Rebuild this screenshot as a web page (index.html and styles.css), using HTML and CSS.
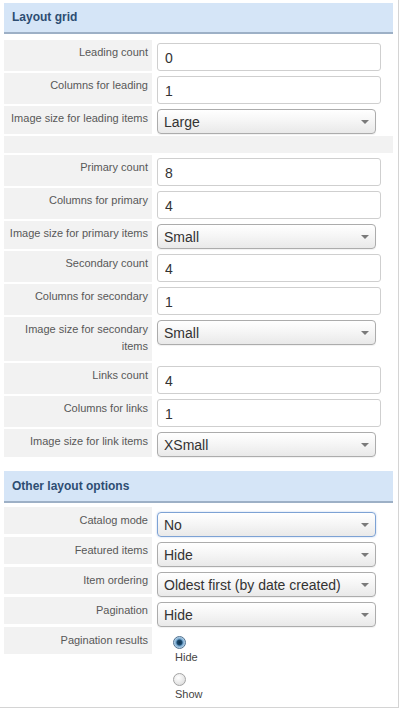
FILE: index.html
```html
<!DOCTYPE html>
<html>
  <head>
    <title>Layout options</title>
    <link rel="stylesheet" href="styles.css">
  </head>
  <body>
    <div class="panel">
      <div class="section-title">Layout grid</div>

      <div class="row">
        <label class="key" for="leadingCount">Leading count</label>
        <div class="field"><input class="text" type="text" id="leadingCount" value="0"></div>
      </div>
      <div class="row">
        <label class="key" for="leadingCols">Columns for leading</label>
        <div class="field"><input class="text" type="text" id="leadingCols" value="1"></div>
      </div>
      <div class="row">
        <label class="key" for="leadingSize">Image size for leading items</label>
        <div class="field">
          <div class="select-wrap">
            <select id="leadingSize"><option>Large</option></select>
          </div>
        </div>
      </div>

      <div class="spacer"></div>

      <div class="row">
        <label class="key" for="primaryCount">Primary count</label>
        <div class="field"><input class="text" type="text" id="primaryCount" value="8"></div>
      </div>
      <div class="row">
        <label class="key" for="primaryCols">Columns for primary</label>
        <div class="field"><input class="text" type="text" id="primaryCols" value="4"></div>
      </div>
      <div class="row">
        <label class="key" for="primarySize">Image size for primary items</label>
        <div class="field">
          <div class="select-wrap">
            <select id="primarySize"><option>Small</option></select>
          </div>
        </div>
      </div>
      <div class="row">
        <label class="key" for="secondaryCount">Secondary count</label>
        <div class="field"><input class="text" type="text" id="secondaryCount" value="4"></div>
      </div>
      <div class="row">
        <label class="key" for="secondaryCols">Columns for secondary</label>
        <div class="field"><input class="text" type="text" id="secondaryCols" value="1"></div>
      </div>
      <div class="row">
        <label class="key" for="secondarySize">Image size for secondary items</label>
        <div class="field">
          <div class="select-wrap">
            <select id="secondarySize"><option>Small</option></select>
          </div>
        </div>
      </div>
      <div class="row">
        <label class="key" for="linksCount">Links count</label>
        <div class="field"><input class="text" type="text" id="linksCount" value="4"></div>
      </div>
      <div class="row">
        <label class="key" for="linksCols">Columns for links</label>
        <div class="field"><input class="text" type="text" id="linksCols" value="1"></div>
      </div>
      <div class="row">
        <label class="key" for="linksSize">Image size for link items</label>
        <div class="field">
          <div class="select-wrap">
            <select id="linksSize"><option>XSmall</option></select>
          </div>
        </div>
      </div>

      <div class="section-title second">Other layout options</div>

      <div class="row compact">
        <label class="key" for="catalogMode">Catalog mode</label>
        <div class="field">
          <div class="select-wrap">
            <select id="catalogMode" class="focused"><option>No</option></select>
          </div>
        </div>
      </div>
      <div class="row compact">
        <label class="key" for="featured">Featured items</label>
        <div class="field">
          <div class="select-wrap">
            <select id="featured"><option>Hide</option></select>
          </div>
        </div>
      </div>
      <div class="row compact">
        <label class="key" for="ordering">Item ordering</label>
        <div class="field">
          <div class="select-wrap">
            <select id="ordering"><option>Oldest first (by date created)</option></select>
          </div>
        </div>
      </div>
      <div class="row compact">
        <label class="key" for="pagination">Pagination</label>
        <div class="field">
          <div class="select-wrap">
            <select id="pagination"><option>Hide</option></select>
          </div>
        </div>
      </div>
      <div class="row compact last">
        <div class="key">Pagination results</div>
        <div class="field radios">
          <label class="radio-item">
            <input type="radio" name="paginationResults" value="0" checked>
            <span>Hide</span>
          </label>
          <label class="radio-item">
            <input type="radio" name="paginationResults" value="1">
            <span>Show</span>
          </label>
        </div>
      </div>
    </div>
  </body>
</html>
```

FILE: styles.css
```css
body {
  margin: 0;
  background: #fff;
  font-family: "Liberation Sans", Arial, sans-serif;
}

.panel {
  width: 399px;
  box-sizing: border-box;
  padding: 3px 5px 5px 4px;
  border-right: 1px solid #d4d4d4;
  border-bottom: 1px solid #d4d4d4;
}

.section-title {
  height: 29px;
  line-height: 29px;
  padding-left: 8px;
  background-color: #d5e5f7;
  border-bottom: 2px solid #9db0c6;
  color: #2d4d72;
  font-size: 12px;
  font-weight: bold;
  margin-bottom: 6px;
}

.section-title.second {
  margin-top: 14px;
  height: 30px;
  line-height: 30px;
  margin-bottom: 4px;
}

.row {
  display: flex;
  margin-bottom: 2px;
}

.key {
  width: 148px;
  flex-shrink: 0;
  box-sizing: border-box;
  padding: 4px 4px 6px 0;
  text-align: right;
  background-color: #f2f2f2;
  color: #585858;
  font-size: 11px;
  line-height: 17px;
}

.field {
  padding: 3px 0 0 5px;
}

.row.compact {
  height: 30px;
  margin-bottom: 0;
  align-items: flex-start;
}

.row.compact .key {
  height: 27px;
  padding-top: 5px;
}

.row.compact .field {
  padding-top: 5px;
}

.row.compact.last {
  height: auto;
}

.spacer {
  height: 17px;
  background-color: #f2f2f2;
  margin-bottom: 2px;
}

input.text {
  width: 224px;
  height: 28px;
  box-sizing: border-box;
  padding: 1px 7px 0;
  border: 1px solid #cfcfcf;
  border-radius: 3px;
  background: #fff;
  color: #333;
  font-family: "Liberation Sans", Arial, sans-serif;
  font-size: 14px;
  outline: none;
}

.select-wrap {
  position: relative;
  width: 219px;
}

.select-wrap::after {
  content: "";
  position: absolute;
  right: 7px;
  top: 11px;
  border-left: 4px solid transparent;
  border-right: 4px solid transparent;
  border-top: 4px solid #7a7a7a;
  pointer-events: none;
}

select {
  -webkit-appearance: none;
  appearance: none;
  width: 219px;
  height: 25px;
  box-sizing: border-box;
  padding: 1px 20px 0 6px;
  border: 1px solid #acacac;
  border-radius: 4px;
  background: linear-gradient(#ffffff, #f6f6f6 45%, #e9e9e9);
  box-shadow: 0 1px 1px rgba(0, 0, 0, 0.06);
  color: #333;
  font-family: "Liberation Sans", Arial, sans-serif;
  font-size: 14px;
  outline: none;
}

select.focused {
  border-color: #7da2d4;
  box-shadow: 0 0 2px rgba(90, 140, 210, 0.45);
}

.row.compact .field.radios {
  padding: 9px 0 0 21px;
  display: flex;
  flex-direction: column;
  gap: 8px;
}

.radio-item {
  display: flex;
  flex-direction: column;
  align-items: flex-start;
  color: #444;
  font-size: 11px;
  line-height: 16px;
}

.radio-item span {
  margin-left: 2px;
}

.radio-item input {
  -webkit-appearance: none;
  appearance: none;
  width: 13px;
  height: 13px;
  margin: 0;
  border: 1px solid #a3a3a3;
  border-radius: 50%;
  background: radial-gradient(circle at 40% 35%, #ffffff, #e2e2e2 70%, #cfcfcf);
  box-sizing: border-box;
}

.radio-item input:checked {
  border-color: #50718f;
  background: radial-gradient(circle at 50% 50%, #0d3350 0, #1c4a6e 2.5px, #6fa3cc 3.5px, #cfe2f2 6px);
}
```
